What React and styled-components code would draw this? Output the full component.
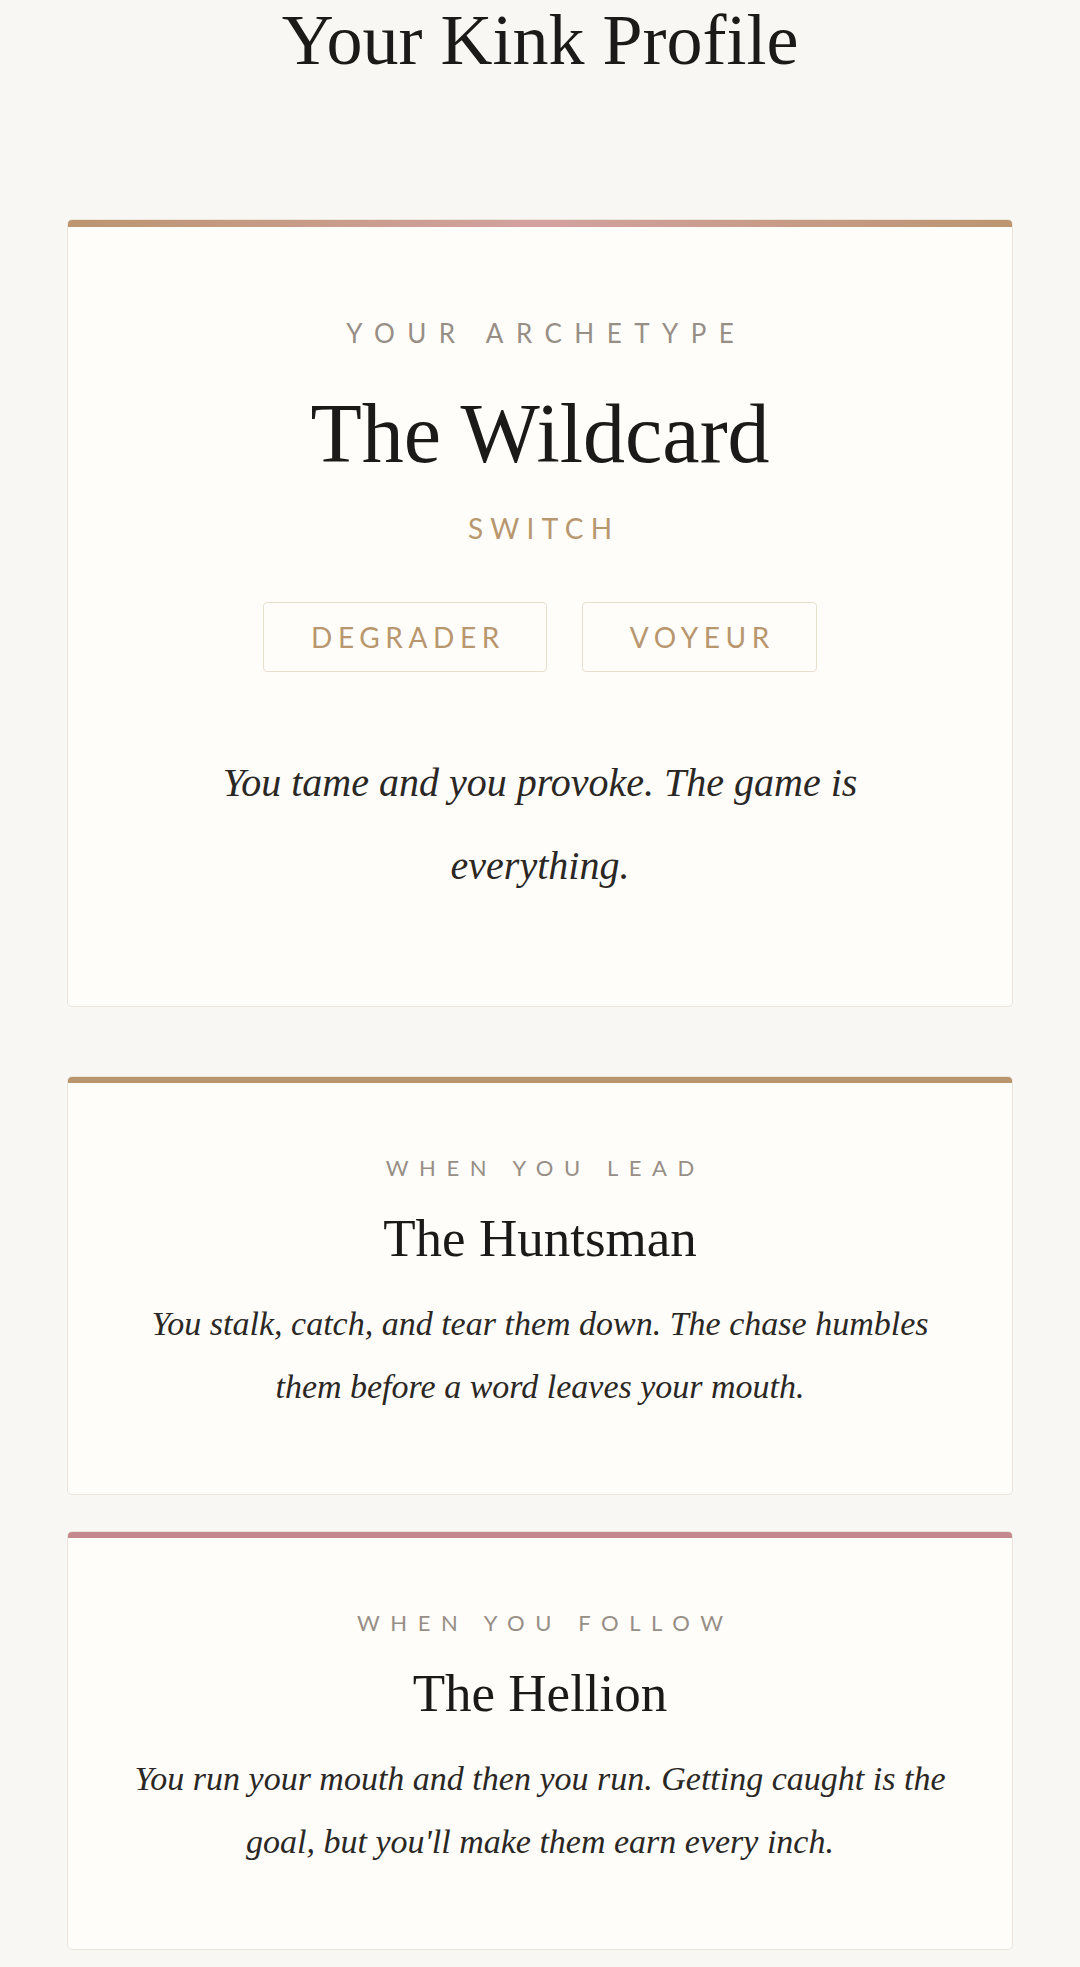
import React from 'react'
import styled, { createGlobalStyle } from 'styled-components'

const GlobalStyle = createGlobalStyle`
  body {
    margin: 0;
    background-color: #f9f7f3;
    font-family: "Liberation Serif", serif;
    color: #1c1a18;
  }
`

const serif = `"Liberation Serif", "Times New Roman", serif`
const sans = `Lato, "Open Sans", sans-serif`

const Page = styled.main`
  padding: 4px 67px 16px;
`

const PageTitle = styled.h1`
  margin: 0 0 143px;
  font-family: ${serif};
  font-weight: 400;
  font-size: 72px;
  line-height: 72px;
  text-align: center;
  color: #1c1a18;
`

const Card = styled.section`
  background-color: #fefdf9;
  border: 1px solid #ebe5dc;
  border-radius: 5px;
  overflow: hidden;
  margin-bottom: ${p => p.$gapAfter}px;
`

const AccentBar = styled.div`
  height: ${p => p.$height}px;
  background: ${p => p.$accent};
`

const CardBody = styled.div`
  display: flex;
  flex-direction: column;
  align-items: center;
  text-align: center;
  padding: ${p => (p.$featured ? '91px 40px 99px' : '72px 40px 76px')};
`

const Eyebrow = styled.div`
  font-family: ${sans};
  font-weight: 400;
  font-size: ${p => (p.$featured ? 26 : 22)}px;
  line-height: ${p => (p.$featured ? 30 : 25)}px;
  letter-spacing: 0.48em;
  text-transform: uppercase;
  color: #978e86;
  margin-right: -0.48em;
`

const Name = styled.h2`
  margin: ${p => (p.$featured ? '40px 0 0' : '29px 0 0')};
  font-family: ${serif};
  font-weight: 400;
  font-size: ${p => (p.$featured ? 84 : 53)}px;
  line-height: ${p => (p.$featured ? 92 : 58)}px;
  color: #1c1a18;
`

const Role = styled.div`
  margin-top: 31px;
  font-family: ${sans};
  font-size: 28px;
  line-height: 34px;
  letter-spacing: 0.26em;
  margin-right: -0.26em;
  text-transform: uppercase;
  color: #b8976e;
`

const TagRow = styled.div`
  display: flex;
  justify-content: center;
  gap: 35px;
  margin-top: 57px;
`

const Tag = styled.span`
  display: inline-block;
  padding: 17px 41px 17px 47px;
  border: 1px solid #e8dfd1;
  border-radius: 4px;
  font-family: ${sans};
  font-size: 28px;
  line-height: 34px;
  letter-spacing: 0.2em;
  text-transform: uppercase;
  color: #b8976e;
`

const Blurb = styled.p`
  margin: ${p => (p.$featured ? '69px 0 0' : '25px 0 0')};
  font-family: ${serif};
  font-style: italic;
  font-weight: 400;
  font-size: ${p => (p.$featured ? 40 : 34)}px;
  line-height: ${p => (p.$featured ? 83 : 63)}px;
  color: #2a2724;
  white-space: nowrap;
`

const profile = {
  archetype: 'The Wildcard',
  role: 'Switch',
  tags: ['Degrader', 'Voyeur'],
  blurb: ['You tame and you provoke. The game is', 'everything.'],
}

const sides = [
  {
    label: 'When you lead',
    name: 'The Huntsman',
    accent: '#b8956a',
    blurb: [
      'You stalk, catch, and tear them down. The chase humbles',
      'them before a word leaves your mouth.',
    ],
  },
  {
    label: 'When you follow',
    name: 'The Hellion',
    accent: '#c4878c',
    blurb: [
      'You run your mouth and then you run. Getting caught is the',
      "goal, but you'll make them earn every inch.",
    ],
  },
]

const Lines = ({ lines }) =>
  lines.map((line, i) => (
    <React.Fragment key={i}>
      {i > 0 && <br />}
      {line}
    </React.Fragment>
  ))

export default function App () {
  return (
    <>
      <GlobalStyle />
      <Page>
        <PageTitle>Your Kink Profile</PageTitle>

        <Card $gapAfter={69}>
          <AccentBar
            $height={7}
            $accent='linear-gradient(90deg, #bb9670 0%, #d4a1a0 50%, #bb9670 100%)'
          />
          <CardBody $featured>
            <Eyebrow $featured>Your Archetype</Eyebrow>
            <Name $featured>{profile.archetype}</Name>
            <Role>{profile.role}</Role>
            <TagRow>
              {profile.tags.map(t => <Tag key={t}>{t}</Tag>)}
            </TagRow>
            <Blurb $featured><Lines lines={profile.blurb} /></Blurb>
          </CardBody>
        </Card>

        {sides.map((s, i) => (
          <Card key={s.name} $gapAfter={i === sides.length - 1 ? 0 : 36}>
            <AccentBar $height={6} $accent={s.accent} />
            <CardBody>
              <Eyebrow>{s.label}</Eyebrow>
              <Name>{s.name}</Name>
              <Blurb><Lines lines={s.blurb} /></Blurb>
            </CardBody>
          </Card>
        ))}
      </Page>
    </>
  )
}
